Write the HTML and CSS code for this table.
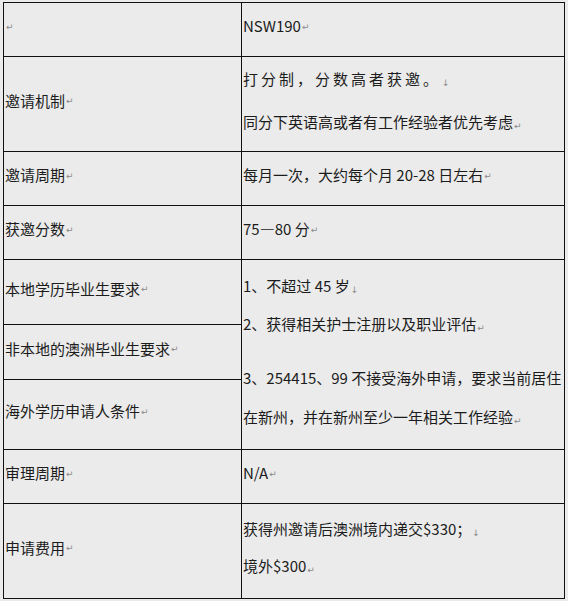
FILE: index.html
```html
<!DOCTYPE html>
<html lang="zh-CN">
<head>
<meta charset="utf-8">
<title>NSW190</title>
<link rel="stylesheet" href="styles.css">
</head>
<body>
<div class="sheet">
  <div class="cell single"><span class="mark">↵</span></div>
  <div class="cell single">NSW190<span class="mark">↵</span></div>

  <div class="cell single">邀请机制<span class="mark">↵</span></div>
  <div class="cell multi r2">
    <div class="line wide">打分制，分数高者获邀。<span class="mark">↓</span></div>
    <div class="line gap19">同分下英语高或者有工作经验者优先考虑<span class="mark">↵</span></div>
  </div>

  <div class="cell single">邀请周期<span class="mark">↵</span></div>
  <div class="cell single">每月一次，大约每个月 20-28 日左右<span class="mark">↵</span></div>

  <div class="cell single">获邀分数<span class="mark">↵</span></div>
  <div class="cell single">75—80 分<span class="mark">↵</span></div>

  <div class="cell single">本地学历毕业生要求<span class="mark">↵</span></div>
  <div class="cell multi merged">
    <div class="line">1、不超过 45 岁<span class="mark">↓</span></div>
    <div class="line gap14">2、获得相关护士注册以及职业评估<span class="mark">↵</span></div>
    <div class="line gap30">3、254415、99 不接受海外申请，要求当前居住</div>
    <div class="line gap15">在新州，并在新州至少一年相关工作经验<span class="mark">↵</span></div>
  </div>

  <div class="cell single">非本地的澳洲毕业生要求<span class="mark">↵</span></div>

  <div class="cell single">海外学历申请人条件<span class="mark">↵</span></div>

  <div class="cell single">审理周期<span class="mark">↵</span></div>
  <div class="cell single">N/A<span class="mark">↵</span></div>

  <div class="cell single">申请费用<span class="mark">↵</span></div>
  <div class="cell multi r9">
    <div class="line">获得州邀请后澳洲境内递交$330；<span class="mark">↓</span></div>
    <div class="line gap13">境外$300<span class="mark">↵</span></div>
  </div>
</div>
</body>
</html>
```

FILE: styles.css
```css
html, body {
  margin: 0;
  padding: 0;
  background: #ebebeb;
}

body {
  font-family: "Noto Sans CJK SC", "Noto Sans", sans-serif;
  font-size: 15px;
  color: #1c1c1c;
}

.sheet {
  margin: 2px 0 0 3px;
  width: 561px;
  display: grid;
  grid-template-columns: 238px 323px;
  grid-template-rows: 54px 95px 54px 54px 65px 55px 70px 54px 95px;
  border-top: 1px solid #111;
  border-left: 1px solid #111;
}

.cell {
  box-sizing: border-box;
  border-right: 1px solid #111;
  border-bottom: 1px solid #111;
  padding-left: 1px;
  white-space: nowrap;
}

.single {
  display: flex;
  align-items: center;
  padding-bottom: 8px;
}

.multi {
  display: flex;
  flex-direction: column;
}

.line {
  height: 24px;
  line-height: 24px;
}

.r2 { padding-top: 10px; }
.r9 { padding-top: 13px; }
.merged {
  grid-column: 2;
  grid-row: 5 / span 3;
  padding-top: 14px;
}

.wide { letter-spacing: 3px; }
.wide .mark { letter-spacing: 0; }

.gap13 { margin-top: 13px; }
.gap14 { margin-top: 14px; }
.gap15 { margin-top: 15px; }
.gap19 { margin-top: 19px; }
.gap30 { margin-top: 30px; }

.mark {
  font-family: "DejaVu Sans", sans-serif;
  font-size: 9px;
  color: #8a8a8a;
  margin-left: 1px;
  position: relative;
  top: 1px;
}
```
